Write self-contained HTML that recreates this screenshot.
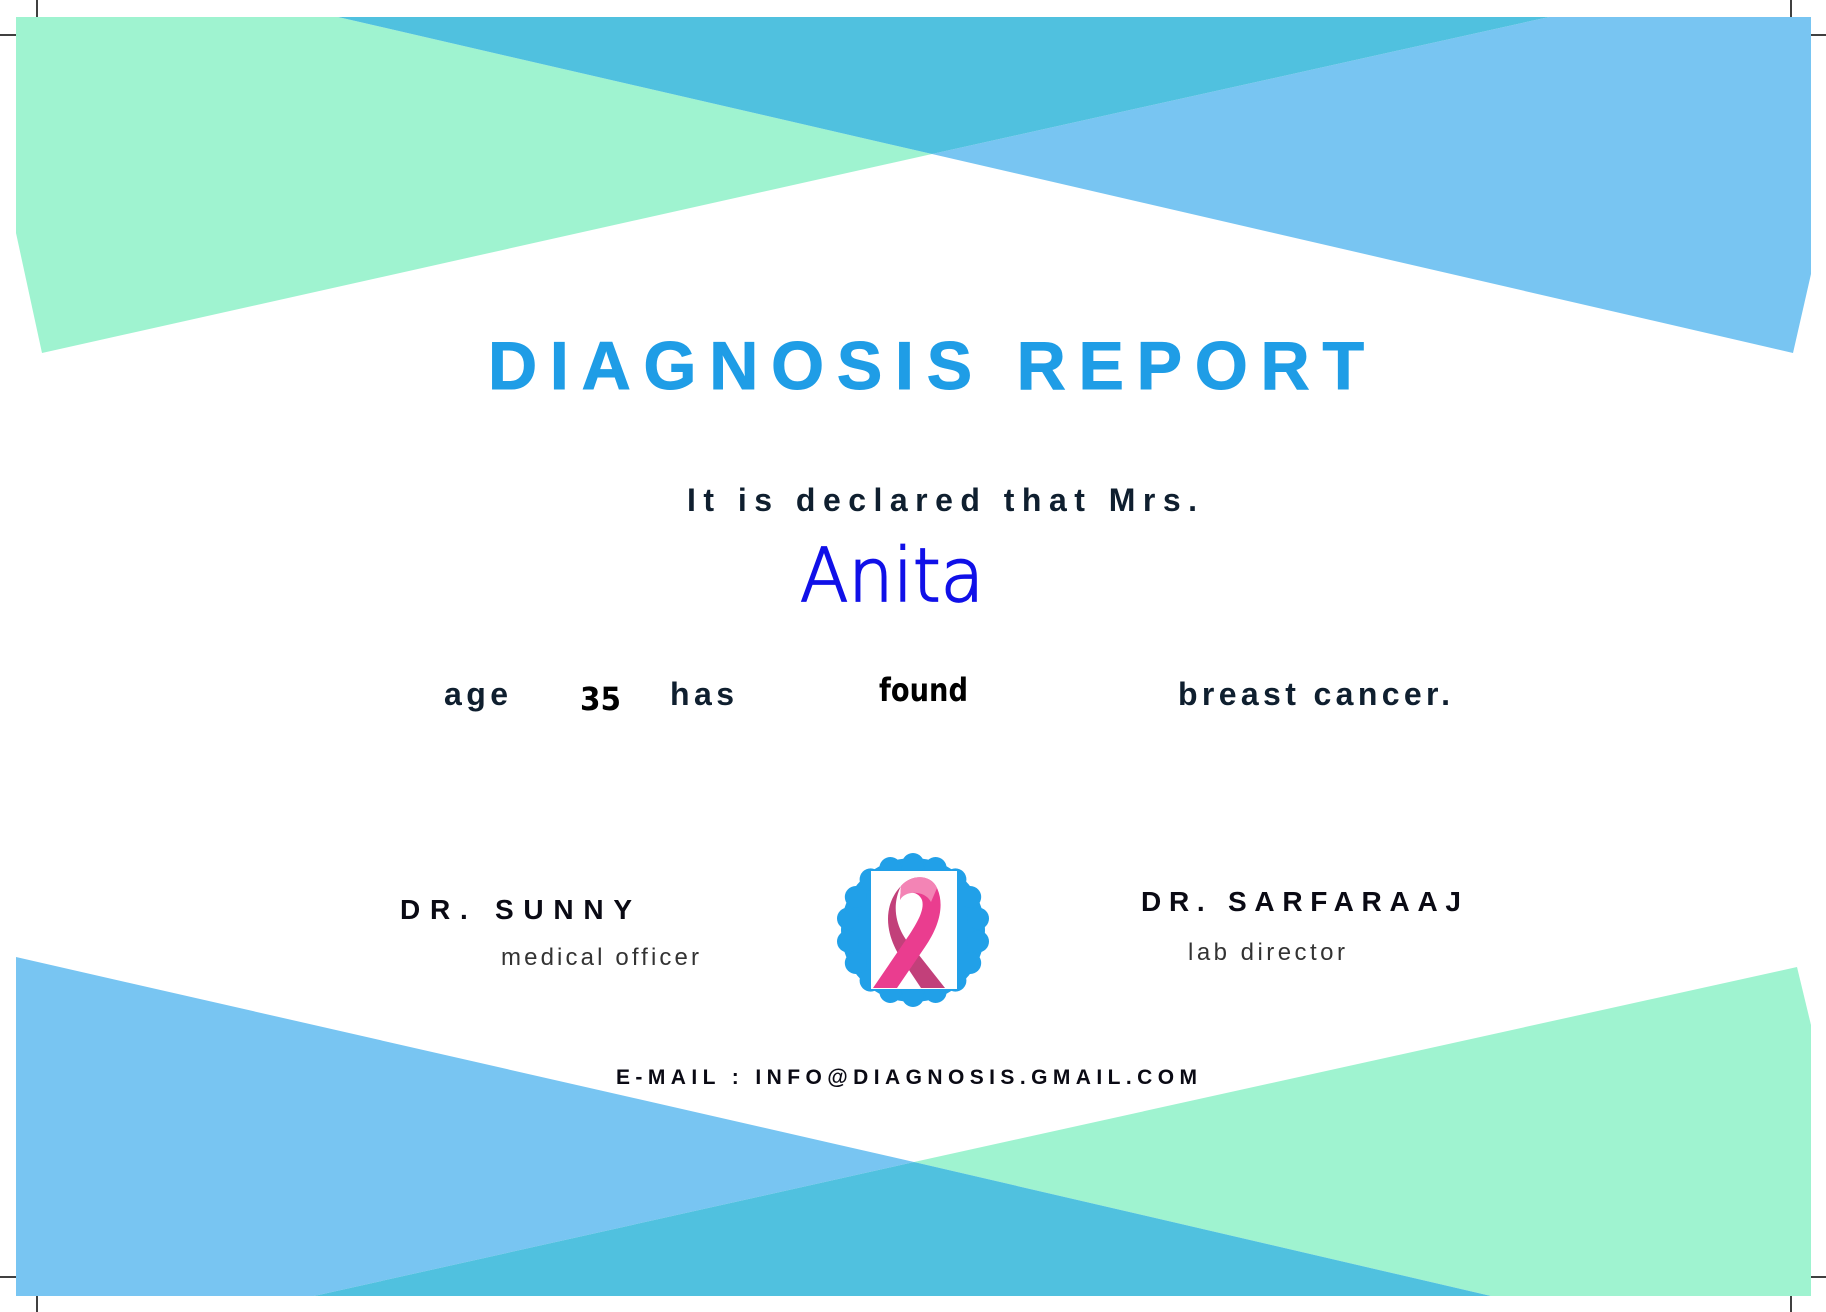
<!DOCTYPE html>
<html><head><meta charset="utf-8"><style>
html,body{margin:0;padding:0;background:#fff;width:1826px;height:1312px;overflow:hidden}
svg{display:block}
</style></head><body>
<svg width="1826" height="1312" viewBox="0 0 1826 1312" xmlns="http://www.w3.org/2000/svg">
<g stroke="#000" stroke-width="1.5">
<line x1="37" y1="0" x2="37" y2="17"/><line x1="0" y1="35" x2="16" y2="35"/>
<line x1="1791" y1="0" x2="1791" y2="17"/><line x1="1811" y1="35" x2="1826" y2="35"/>
<line x1="37" y1="1296" x2="37" y2="1312"/><line x1="0" y1="1277" x2="16" y2="1277"/>
<line x1="1791" y1="1296" x2="1791" y2="1312"/><line x1="1811" y1="1277" x2="1826" y2="1277"/>
</g>
<polygon points="16,17 338,17 932,154 42,353 16,233" fill="#9ff3d0"/>
<polygon points="1549,17 1811,17 1811,274 1793,353 932,154" fill="#78c5f2"/>
<polygon points="338,17 1549,17 932,154" fill="#50c1df"/>
<polygon points="16,957 914,1162 314,1296 16,1296" fill="#78c5f2"/>
<polygon points="914,1162 1797,967 1811,1025 1811,1296 1491,1296" fill="#9ff3d0"/>
<polygon points="314,1296 914,1162 1491,1296" fill="#50c1df"/>
<text x="488" y="389" textLength="876" lengthAdjust="spacing" font-family="Liberation Sans, sans-serif" font-weight="bold" font-size="68" stroke="#1f9de6" stroke-width="1" fill="#1f9de6">DIAGNOSIS REPORT</text>
<text x="687" y="511" textLength="510" lengthAdjust="spacing" font-family="Liberation Sans, sans-serif" font-weight="bold" font-size="32" fill="#0f1f2f">It is declared that Mrs.</text>
<text x="800" y="601" textLength="184" lengthAdjust="spacingAndGlyphs" font-family="DejaVu Sans, sans-serif" font-weight="200" font-size="74" fill="#1010e8" stroke="#1010e8" stroke-width="1.8">Anita</text>
<g font-family="Liberation Sans, sans-serif" font-weight="bold" font-size="32" fill="#0f1f2f">
<text x="444" y="705" textLength="64" lengthAdjust="spacing">age</text>
<text x="670" y="705" textLength="64" lengthAdjust="spacing">has</text>
<text x="1178" y="705" textLength="272" lengthAdjust="spacing">breast cancer.</text>
</g>
<text x="580" y="710" textLength="41" lengthAdjust="spacingAndGlyphs" font-family="DejaVu Sans, sans-serif" font-weight="bold" font-size="32" fill="#000">35</text>
<text x="879" y="701" textLength="89" lengthAdjust="spacingAndGlyphs" font-family="DejaVu Sans, sans-serif" font-weight="bold" font-size="32" fill="#000">found</text>
<g font-family="Liberation Sans, sans-serif" font-weight="bold" font-size="28" fill="#0a0a14">
<text x="400" y="919" textLength="232" lengthAdjust="spacing">DR.  SUNNY</text>
<text x="1141" y="911" textLength="320" lengthAdjust="spacing">DR. SARFARAAJ</text>
</g>
<g font-family="Liberation Sans, sans-serif" font-size="24" fill="#333">
<text x="501" y="965" textLength="198" lengthAdjust="spacing">medical officer</text>
<text x="1188" y="960" textLength="157" lengthAdjust="spacing">lab director</text>
</g>
<text x="616" y="1084" textLength="581" lengthAdjust="spacing" font-family="Liberation Sans, sans-serif" font-weight="bold" font-size="21" fill="#0a0a14">E-MAIL : INFO@DIAGNOSIS.GMAIL.COM</text>
<g transform="translate(913,930)">
<circle r="72" fill="#21a0e8"/>
<g fill="#21a0e8">
<circle cx="0" cy="-66" r="11"/><circle cx="22.6" cy="-62" r="11"/><circle cx="42.4" cy="-50.6" r="11"/><circle cx="57.2" cy="-33" r="11"/><circle cx="65" cy="-11.5" r="11"/><circle cx="65" cy="11.5" r="11"/><circle cx="57.2" cy="33" r="11"/><circle cx="42.4" cy="50.6" r="11"/><circle cx="22.6" cy="62" r="11"/><circle cx="0" cy="66" r="11"/><circle cx="-22.6" cy="62" r="11"/><circle cx="-42.4" cy="50.6" r="11"/><circle cx="-57.2" cy="33" r="11"/><circle cx="-65" cy="11.5" r="11"/><circle cx="-65" cy="-11.5" r="11"/><circle cx="-57.2" cy="-33" r="11"/><circle cx="-42.4" cy="-50.6" r="11"/><circle cx="-22.6" cy="-62" r="11"/>
</g>
<rect x="-42" y="-59" width="86" height="118" fill="#fff"/>
<path d="M-12,-44 C-24,-20 -14,5 2,20 L32,58 L8,58 L-14,25 C-28,2 -30,-25 -12,-44 Z" fill="#c2407a"/>
<path d="M-12,-44 C-2,-56 18,-56 24,-42 C32,-25 26,-3 12,17 L-16,58 L-40,58 L-10,14 C4,-6 12,-20 9,-30 C5,-40 -10,-40 -13,-30 Z" fill="#ea3d8f"/>
<path d="M-12,-44 C-2,-56 18,-56 24,-42 L18,-28 C12,-40 -8,-40 -13,-30 Z" fill="#f384b5"/>
</g>
</svg>
</body></html>
